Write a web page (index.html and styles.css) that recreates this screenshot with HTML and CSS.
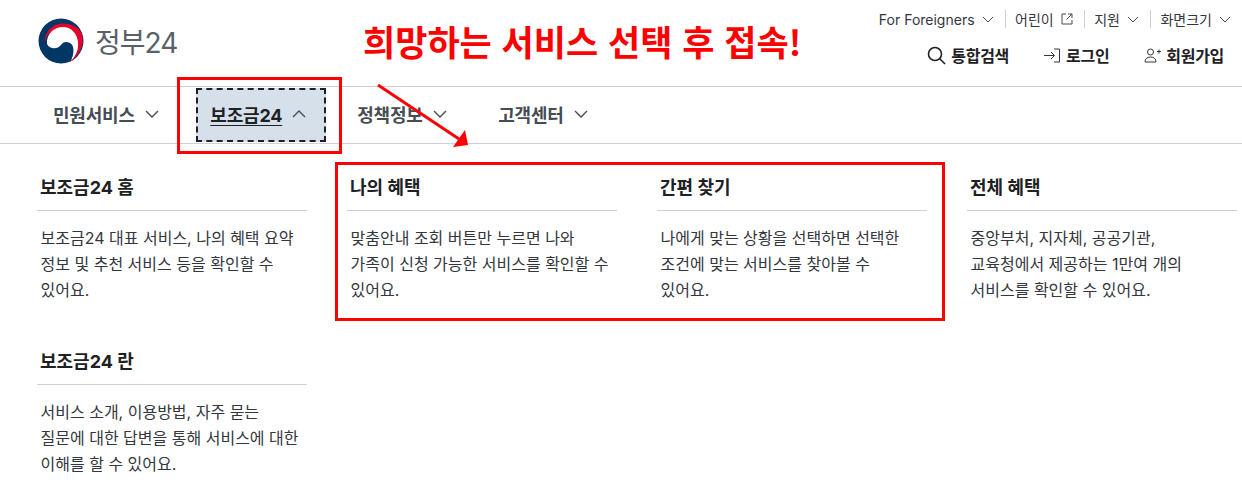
FILE: index.html
```html
<!DOCTYPE html>
<html lang="ko">
<head>
    <meta charset="UTF-8">
    <title>정부24</title>
    <link rel="stylesheet" href="styles.css">
</head>
<body>
    <header class="top">
        <a class="logo" href="#">
            <svg width="46" height="46" viewBox="0 0 46 46">
                <circle cx="23" cy="23" r="22.500" fill="#003764"/>
                <path d="M7 25C6 13 15 5.500 25 5.500c8 0 14.500 3 18.500 9C47 24 43 37 32 44c5-7 6-15 3-21C32 16 26 12 20 12 12 12 8 18 7 25z" fill="#e4002b"/>
                <path d="M9 26C8 16 16 9 25 9c8 0 14 6 15 15 1 8-3 15-7 19 3-7 4-15-1-18-4-2-7-1-9 2-3 4-11 5-14-1z" fill="#fff"/>
            </svg>
            <span class="logo-text">정부24</span>
        </a>
        <div class="top-right">
            <ul class="util">
                <li>For Foreigners <svg class="chev-sm" viewBox="0 0 12 7"><path d="M1 1l5 5 5-5"/></svg></li>
                <li>어린이 <svg class="ext" viewBox="0 0 12 12"><path d="M5 1H1v10h10V7M7 1h4v4M11 1L5.500 6.500"/></svg></li>
                <li>지원 <svg class="chev-sm" viewBox="0 0 12 7"><path d="M1 1l5 5 5-5"/></svg></li>
                <li>화면크기 <svg class="chev-sm" viewBox="0 0 12 7"><path d="M1 1l5 5 5-5"/></svg></li>
            </ul>
            <div class="actions">
                <a href="#"><svg width="19" height="19" viewBox="0 0 19 19" class="ico"><circle cx="8" cy="8" r="6.500"/><path d="M12.800 12.800L18 18"/></svg>통합검색</a>
                <a href="#"><svg width="17" height="15" viewBox="0 0 17 15" class="ico thin"><path d="M0 7.500h10M7 4l3.500 3.500L7 11M10 1h5.500v13H10"/></svg>로그인</a>
                <a href="#"><svg width="17" height="15" viewBox="0 0 17 15" class="ico thin"><circle cx="6.500" cy="4" r="3"/><path d="M1 14c0-3 2-5 5.500-5S12 11 12 14zM13 3.500h4M15 1.500v4"/></svg>회원가입</a>
            </div>
        </div>
    </header>

    <nav class="gnb">
        <a href="#">민원서비스 <svg class="chev" viewBox="0 0 14 8"><path d="M1 1l6 6 6-6"/></svg></a>
        <a href="#" class="active"><span>보조금24</span> <svg class="chev" viewBox="0 0 14 8"><path d="M1 7l6-6 6 6"/></svg></a>
        <a href="#">정책정보 <svg class="chev" viewBox="0 0 14 8"><path d="M1 1l6 6 6-6"/></svg></a>
        <a href="#">고객센터 <svg class="chev" viewBox="0 0 14 8"><path d="M1 1l6 6 6-6"/></svg></a>
    </nav>

    <section class="menu">
        <div class="item">
            <h3>보조금24 홈</h3>
            <p>보조금24 대표 서비스, 나의 혜택 요약<br>정보 및 추천 서비스 등을 확인할 수<br>있어요.</p>
        </div>
        <div class="item">
            <h3>나의 혜택</h3>
            <p>맞춤안내 조회 버튼만 누르면 나와<br>가족이 신청 가능한 서비스를 확인할 수<br>있어요.</p>
        </div>
        <div class="item">
            <h3>간편 찾기</h3>
            <p>나에게 맞는 상황을 선택하면 선택한<br>조건에 맞는 서비스를 찾아볼 수<br>있어요.</p>
        </div>
        <div class="item">
            <h3>전체 혜택</h3>
            <p>중앙부처, 지자체, 공공기관,<br>교육청에서 제공하는 1만여 개의<br>서비스를 확인할 수 있어요.</p>
        </div>
        <div class="item">
            <h3>보조금24 란</h3>
            <p>서비스 소개, 이용방법, 자주 묻는<br>질문에 대한 답변을 통해 서비스에 대한<br>이해를 할 수 있어요.</p>
        </div>
    </section>

    <!-- annotations on top of the capture -->
    <div class="note">희망하는 서비스 선택 후 접속!</div>
    <div class="red-box box-nav"></div>
    <div class="red-box box-menu"></div>
    <svg class="arrow" width="100" height="72" viewBox="0 0 100 72">
        <path d="M1 1L82 55" stroke="#f00" stroke-width="3" fill="none"/>
        <path d="M88 46L91 61 76 63z" fill="#f00"/>
    </svg>
</body>
</html>
```

FILE: styles.css
```css
* {
    box-sizing: border-box;
}

body {
    margin: 0;
    height: 486px;
    overflow: hidden;
    position: relative;
    background: #fff;
    color: #1e2124;
    font-family: Inter, "Noto Sans CJK KR", sans-serif;
}

a {
    color: inherit;
    text-decoration: none;
}

svg path, svg circle {
    vector-effect: non-scaling-stroke;
}

.top {
    height: 87px;
    border-bottom: 1px solid #cdd1d5;
    display: flex;
    justify-content: space-between;
    padding: 0 11px 0 38px;
}

.logo {
    display: flex;
    align-items: center;
    gap: 11px;
    height: 81px;
}

.logo-text {
    font-size: 28px;
    color: #58616a;
    letter-spacing: -1px;
}

.top-right {
    display: flex;
    flex-direction: column;
    align-items: flex-end;
}

.util {
    list-style: none;
    margin: 0;
    padding: 10px 0 0;
    display: flex;
    font-size: 14px;
    color: #33363d;
}

.util li {
    display: flex;
    align-items: center;
    gap: 7px;
    height: 18px;
    padding: 0 0 0 9px;
    margin-left: 11.5px;
    border-left: 1px solid #cdd1d5;
}

.util li:first-child {
    border-left: 0;
}

.chev-sm {
    width: 12px;
    height: 7px;
    fill: none;
    stroke: #464c53;
}

.ext {
    width: 12px;
    height: 12px;
    fill: none;
    stroke: #464c53;
}

.actions {
    display: flex;
    gap: 35px;
    margin-top: 15px;
    margin-right: 7px;
    font-size: 16px;
    font-weight: 700;
    letter-spacing: -0.3px;
}

.actions a {
    display: flex;
    align-items: center;
    gap: 5px;
}

.ico {
    fill: none;
    stroke: #1e2124;
    stroke-width: 1.6;
}

.ico.thin {
    stroke: #33363d;
    stroke-width: 1;
}

.gnb {
    height: 57px;
    border-bottom: 1px solid #cdd1d5;
    display: flex;
    align-items: flex-start;
    padding: 1px 0 0 39px;
    font-size: 18px;
    font-weight: 700;
    letter-spacing: -0.2px;
    color: #464c53;
}

.gnb a {
    display: flex;
    align-items: center;
    gap: 10px;
    height: 54px;
    padding: 0 14px 3px;
    margin-right: 23.5px;
}

.gnb .active {
    color: #1e2124;
    background: #d6e0eb;
    outline: 2px dashed #1e2124;
    outline-offset: -2px;
    padding-right: 20px;
    margin-right: 17px;
}

.gnb .active span {
    text-decoration: underline;
    text-underline-offset: 3px;
}

.chev {
    width: 14px;
    height: 8px;
    fill: none;
    stroke: #464c53;
    stroke-width: 1.400;
}

.menu {
    display: grid;
    grid-template-columns: repeat(4, 270px);
    column-gap: 40px;
    row-gap: 47px;
    padding: 32px 0 0 37px;
}

.item h3 {
    margin: 0;
    height: 35px;
    padding: 0 3px;
    border-bottom: 1px solid #cdd1d5;
    font-size: 18px;
    line-height: 24px;
    font-weight: 700;
}

.item p {
    margin: 14px 0 0;
    padding-left: 3.5px;
    font-size: 16px;
    line-height: 26px;
    color: #33363d;
    white-space: nowrap;
}

.note {
    position: absolute;
    left: 363px;
    top: 18px;
    color: #f00;
    font-size: 35px;
    font-weight: 700;
    line-height: 46px;
    white-space: nowrap;
    font-family: "Noto Sans CJK KR", sans-serif;
}

.red-box {
    position: absolute;
    border: 3px solid #f00;
}

.box-nav {
    left: 177px;
    top: 77px;
    width: 165px;
    height: 77px;
}

.box-menu {
    left: 335px;
    top: 162px;
    width: 610px;
    height: 159px;
}

.arrow {
    position: absolute;
    left: 377px;
    top: 84px;
}
```
